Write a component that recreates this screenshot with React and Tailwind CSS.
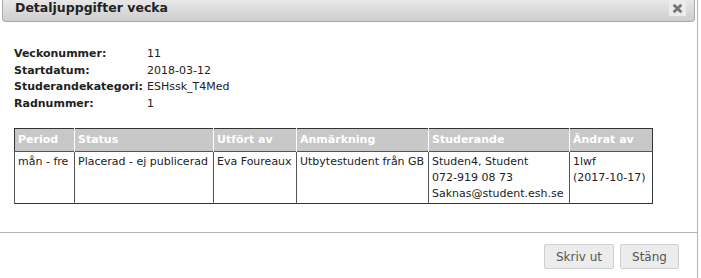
import React from "react";

const fields = [
  ["Veckonummer:", "11"],
  ["Startdatum:", "2018-03-12"],
  ["Studerandekategori:", "ESHssk_T4Med"],
  ["Radnummer:", "1"],
];

const cols = [
  { title: "Period", w: "w-[60px]" },
  { title: "Status", w: "w-[139px]" },
  { title: "Utfört av", w: "w-[83px]" },
  { title: "Anmärkning", w: "w-[132px]" },
  { title: "Studerande", w: "w-[141px]" },
  { title: "Ändrat av", w: "w-[83px]" },
];

const row = [
  ["mån - fre"],
  ["Placerad - ej publicerad"],
  ["Eva Foureaux"],
  ["Utbytestudent från GB"],
  ["Studen4, Student", "072-919 08 73", "Saknas@student.esh.se"],
  ["1lwf", "(2017-10-17)"],
];

export default function App() {
  return (
    <div className="w-[701px] h-[278px] bg-white overflow-hidden text-[11px] text-[#222] font-['DejaVu_Sans',Verdana,sans-serif]">
      <div className="w-[698px] h-full border-r border-[#b5b5b5] flex flex-col">
        <div className="mx-[2px] h-[22px] flex items-center justify-between border border-t-0 border-[#aaa] rounded-b-[4px] bg-gradient-to-b from-[#e8e8e8] to-[#cdcdcd] pl-[12px] pr-[8px]">
          <span className="font-bold text-[12.5px] leading-none -mt-[5px]">Detaljuppgifter vecka</span>
          <button className="w-[17px] h-[16px] self-start bg-[#ececec] flex items-center justify-center">
            <svg width="11" height="11" viewBox="0 0 10 10">
              <path d="M1.5 1.5 L8.5 8.5 M8.5 1.5 L1.5 8.5" stroke="#777" strokeWidth="2.6" />
            </svg>
          </button>
        </div>

        <div className="pl-[14px] pt-[24px]">
          {fields.map(([k, v]) => (
            <div key={k} className="flex leading-[16.5px]">
              <span className="w-[133px] font-bold">{k}</span>
              <span>{v}</span>
            </div>
          ))}
        </div>

        <div className="pl-[14px] pt-[16px]">
          <table className="table-fixed w-[639px] border-collapse border border-[#333] leading-[16px]">
            <thead>
              <tr className="bg-[#c8c8c8] text-white font-bold">
                {cols.map((c) => (
                  <th
                    key={c.title}
                    className={`${c.w} h-[23px] text-left font-bold px-[3px] border-l border-white first:border-l-0`}
                  >
                    {c.title}
                  </th>
                ))}
              </tr>
            </thead>
            <tbody>
              <tr>
                {row.map((lines, i) => (
                  <td
                    key={i}
                    className="h-[52px] align-top px-[3px] pt-[2px] border-l border-t border-[#555] whitespace-nowrap"
                  >
                    {lines.map((l) => (
                      <div key={l}>{l}</div>
                    ))}
                  </td>
                ))}
              </tr>
            </tbody>
          </table>
        </div>

        <div className="mt-[28px] border-t border-[#b0b0b0] flex justify-end gap-[6px] pt-[11px] pr-[18px]">
          <button className="w-[70px] h-[25px] border border-[#cfcfcf] rounded-[2px] bg-[#ececec] text-[#555] text-[12px]">
            Skriv ut
          </button>
          <button className="w-[59px] h-[25px] border border-[#cfcfcf] rounded-[2px] bg-[#ececec] text-[#555] text-[12px]">
            Stäng
          </button>
        </div>
      </div>
    </div>
  );
}
